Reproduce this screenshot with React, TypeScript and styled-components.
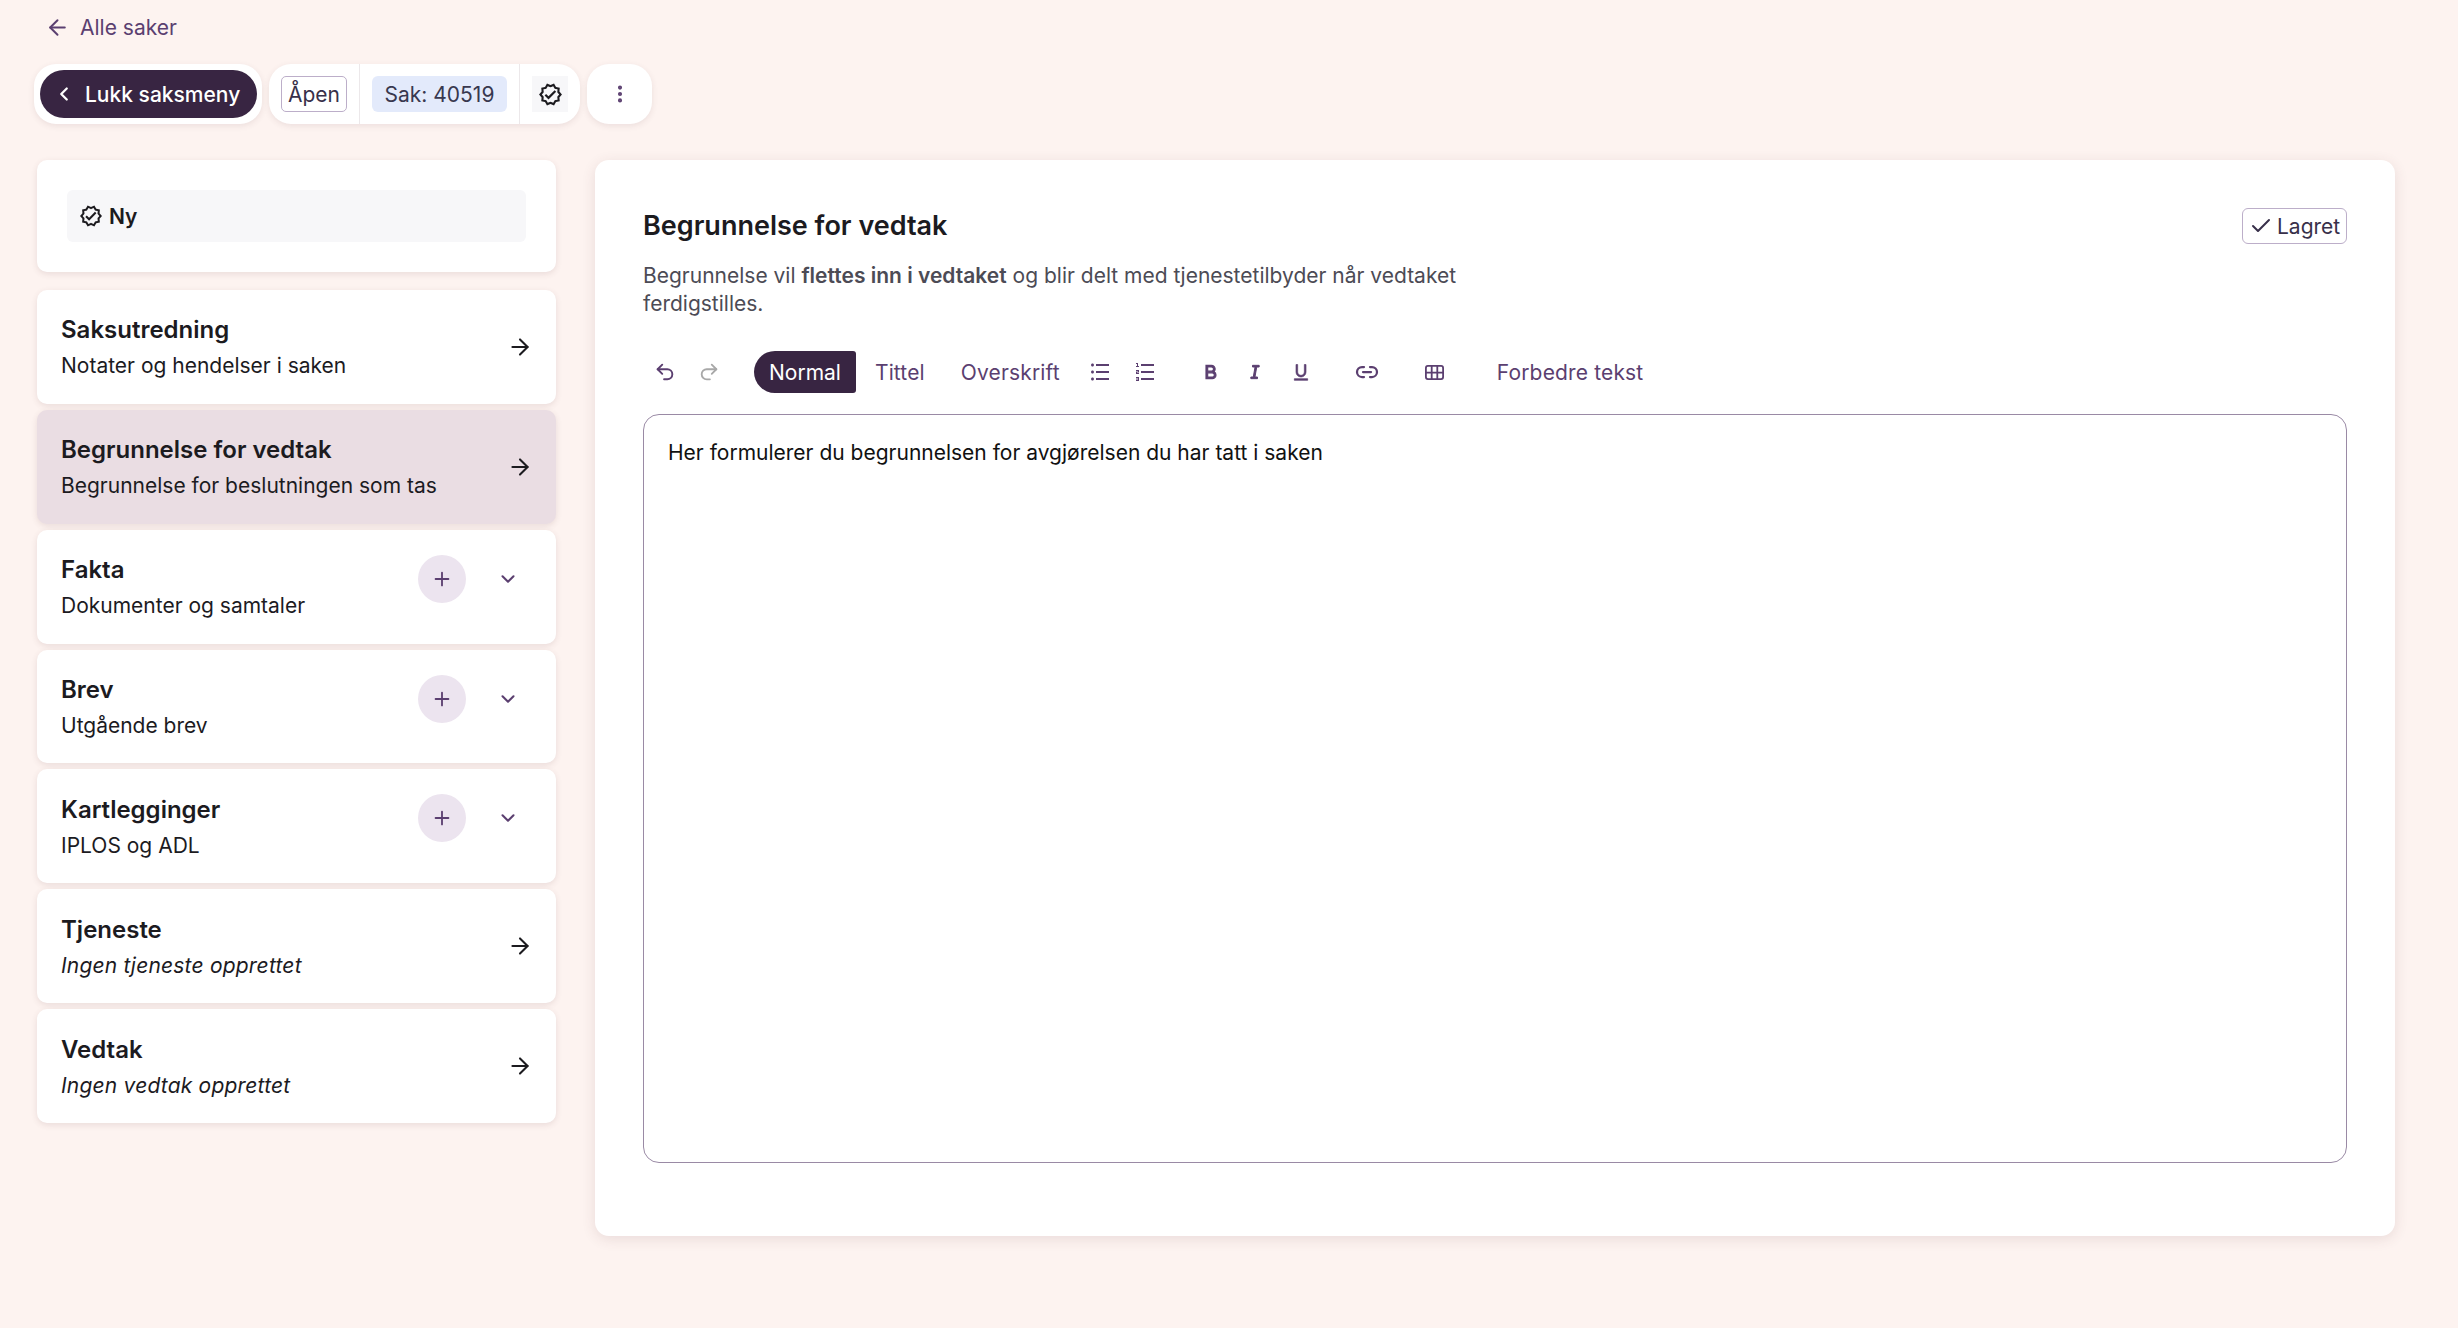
import React from "react";
import styled, { createGlobalStyle } from "styled-components";
import { ArrowLeft, ArrowRight, Check, ChevronDown, ChevronLeft, MoreVertical, Plus, Link2, Undo2, Redo2 } from "lucide-react";
import { MdOutlineVerified } from "react-icons/md";
import { RiBold, RiItalic, RiUnderline, RiListUnordered, RiListOrdered } from "react-icons/ri";

const Global = createGlobalStyle`
  html, body { margin: 0; padding: 0; background: #fdf3f0; }
  body { font-family: Inter, "Liberation Sans", sans-serif; color: #1c1b1f; }
  * { box-sizing: border-box; }
`;

const Page = styled.div`
  min-height: 1328px;
  padding: 0 63px 0 37px;
  display: flex;
  flex-direction: column;
`;
const BackLink = styled.a`
  height: 54px;
  margin-left: 8px;
  display: flex;
  align-items: center;
  gap: 10px;
  font-size: 21px;
  color: #5b3f70;
`;
const TopBar = styled.div`
  margin: 10px 0 36px -3px;
  display: flex;
  gap: 7px;
`;
const BarGroup = styled.div`
  height: 60px;
  background: #fff;
  border-radius: 22px;
  box-shadow: 0 2px 6px rgba(90, 50, 60, 0.1);
  display: flex;
  align-items: center;
`;
const CloseButton = styled.button`
  width: 217px;
  height: 48px;
  margin: 0 5px 0 6px;
  border: 0;
  border-radius: 24px;
  background: #382542;
  color: #fff;
  font: 500 21px Inter, sans-serif;
  display: flex;
  align-items: center;
  padding: 0 0 0 13px;
  gap: 10px;
`;
const BarCell = styled.div<{ $last?: boolean }>`
  height: 100%;
  padding: 0 12px;
  display: flex;
  align-items: center;
  border-right: ${(p) => (p.$last ? "0" : "1px solid #ece8ea")};
`;
const OpenTag = styled.span`
  width: 66px;
  height: 36px;
  display: flex;
  align-items: center;
  justify-content: center;
  border: 1px solid #bcaec9;
  border-radius: 5px;
  font-size: 21px;
  color: #38304a;
`;
const CaseTag = styled.span`
  width: 135px;
  height: 36px;
  display: flex;
  align-items: center;
  justify-content: center;
  border-radius: 6px;
  background: #e3eafb;
  font-size: 21px;
  color: #38384f;
`;
const StatusIcon = styled.span`
  width: 36px;
  height: 36px;
  display: flex;
  align-items: center;
  justify-content: center;
  background: #f7f7f9;
  color: #1c1b1f;
`;
const MoreButton = styled.div`
  width: 65px;
  height: 60px;
  display: flex;
  align-items: center;
  justify-content: center;
  color: #5b3f70;
`;
const Columns = styled.div`
  display: flex;
  gap: 39px;
  align-items: flex-start;
`;
const Side = styled.div`
  width: 519px;
  flex: none;
  display: flex;
  flex-direction: column;
`;
const StatusCard = styled.div`
  height: 112px;
  margin-bottom: 18px;
  padding: 30px;
  background: #fff;
  border-radius: 10px;
  box-shadow: 0 2px 6px rgba(90, 50, 60, 0.12);
`;
const StatusRow = styled.div`
  height: 52px;
  padding: 0 12px;
  display: flex;
  align-items: center;
  gap: 6px;
  background: #f7f7f9;
  border-radius: 6px;
  font-size: 21px;
  font-weight: 600;
`;
const NavCard = styled.div<{ $active?: boolean }>`
  height: 113.86px;
  margin-bottom: 6px;
  padding: 0 23px 0 24px;
  display: flex;
  align-items: center;
  justify-content: space-between;
  background: ${(p) => (p.$active ? "#eaddE3" : "#fff")};
  border-radius: 10px;
  box-shadow: 0 2px 6px rgba(90, 50, 60, 0.12);
`;
const NavText = styled.div`
  display: flex;
  flex-direction: column;
  gap: 8px;
  padding-top: 3px;
`;
const NavTitle = styled.div`
  font-size: 24px;
  line-height: 28px;
  font-weight: 600;
`;
const NavSub = styled.div<{ $empty?: boolean }>`
  font-size: 21px;
  line-height: 28px;
  font-style: ${(p) => (p.$empty ? "italic" : "normal")};
  letter-spacing: ${(p) => (p.$empty ? "0.2px" : "0")};
`;
const NavActions = styled.div`
  display: flex;
  align-items: center;
  gap: 31px;
  margin-top: -16px;
  margin-right: 14px;
  color: #5b3f70;
`;
const AddButton = styled.div`
  width: 48px;
  height: 48px;
  border-radius: 50%;
  background: #ece4ef;
  display: flex;
  align-items: center;
  justify-content: center;
`;
const Main = styled.div`
  flex: 1;
  height: 1076px;
  padding: 48px;
  background: #fff;
  border-radius: 14px;
  box-shadow: 0 3px 14px rgba(90, 50, 60, 0.12);
`;
const MainHead = styled.div`
  display: flex;
  justify-content: space-between;
  align-items: flex-start;
`;
const MainTitle = styled.h1`
  margin: 0;
  font-size: 27px;
  line-height: 36px;
  font-weight: 600;
`;
const SavedTag = styled.span`
  width: 105px;
  height: 36px;
  padding-left: 6px;
  display: flex;
  align-items: center;
  gap: 4px;
  border: 1px solid #bcaec9;
  border-radius: 6px;
  font-size: 21px;
  color: #38304a;
`;
const Lead = styled.p`
  width: 860px;
  margin: 18px 0 0;
  font-size: 21px;
  line-height: 28px;
  color: #4c4b55;
  & b { font-weight: 600; }
`;
const EditorBar = styled.div`
  height: 42px;
  margin: 33px 0 21px;
  display: flex;
  align-items: center;
  color: #5b3f70;
  font-size: 21px;
`;
const IconCell = styled.span<{ $gapLeft?: number; $muted?: boolean }>`
  width: 44px;
  flex: none;
  margin-left: ${(p) => p.$gapLeft ?? 0}px;
  display: flex;
  align-items: center;
  justify-content: center;
  color: ${(p) => (p.$muted ? "#a8a8a8" : "inherit")};
`;
const StyleTab = styled.span<{ $active?: boolean; $gapLeft: number }>`
  height: 42px;
  flex: none;
  margin-left: ${(p) => p.$gapLeft}px;
  padding: ${(p) => (p.$active ? "0 15px" : "0")};
  display: flex;
  align-items: center;
  border-radius: 21px 3px 3px 21px;
  background: ${(p) => (p.$active ? "#382542" : "transparent")};
  color: ${(p) => (p.$active ? "#fff" : "inherit")};
  letter-spacing: ${(p) => (p.$active ? "0" : "0.15px")};
`;
const Editor = styled.div`
  height: 749px;
  padding: 24px 24px;
  border: 1.5px solid #9a8aa5;
  border-radius: 16px;
  font-size: 21px;
  line-height: 28px;
  color: #111;
`;

const TableIcon = () => (
  <svg width="19" height="15" viewBox="0 0 19 15" fill="none" stroke="currentColor" strokeWidth="1.8">
    <rect x="0.9" y="0.9" width="17.2" height="13.2" rx="2" />
    <path d="M0.9 7.7H18.1M6.7 1V14M12.3 1V14" />
  </svg>
);

type Item = { title: string; sub: string; active?: boolean; empty?: boolean; expand?: boolean };
const items: Item[] = [
  { title: "Saksutredning", sub: "Notater og hendelser i saken" },
  { title: "Begrunnelse for vedtak", sub: "Begrunnelse for beslutningen som tas", active: true },
  { title: "Fakta", sub: "Dokumenter og samtaler", expand: true },
  { title: "Brev", sub: "Utgående brev", expand: true },
  { title: "Kartlegginger", sub: "IPLOS og ADL", expand: true },
  { title: "Tjeneste", sub: "Ingen tjeneste opprettet", empty: true },
  { title: "Vedtak", sub: "Ingen vedtak opprettet", empty: true },
];

export default function App() {
  return (
    <Page>
      <Global />
      <BackLink><ArrowLeft size={25} strokeWidth={1.9} />Alle saker</BackLink>
      <TopBar>
        <BarGroup>
          <CloseButton><ChevronLeft size={22} strokeWidth={2.5} />Lukk saksmeny</CloseButton>
        </BarGroup>
        <BarGroup>
          <BarCell><OpenTag>Åpen</OpenTag></BarCell>
          <BarCell><CaseTag>Sak: 40519</CaseTag></BarCell>
          <BarCell $last><StatusIcon><MdOutlineVerified size={25} /></StatusIcon></BarCell>
        </BarGroup>
        <BarGroup>
          <MoreButton><MoreVertical size={22} strokeWidth={2.5} /></MoreButton>
        </BarGroup>
      </TopBar>
      <Columns>
        <Side>
          <StatusCard>
            <StatusRow><MdOutlineVerified size={24} />Ny</StatusRow>
          </StatusCard>
          {items.map((it) => (
            <NavCard key={it.title} $active={it.active}>
              <NavText>
                <NavTitle>{it.title}</NavTitle>
                <NavSub $empty={it.empty}>{it.sub}</NavSub>
              </NavText>
              {it.expand ? (
                <NavActions>
                  <AddButton><Plus size={22} strokeWidth={2} /></AddButton>
                  <ChevronDown size={22} strokeWidth={2.25} />
                </NavActions>
              ) : (
                <ArrowRight size={26} strokeWidth={1.9} />
              )}
            </NavCard>
          ))}
        </Side>
        <Main>
          <MainHead>
            <MainTitle>Begrunnelse for vedtak</MainTitle>
            <SavedTag><Check size={24} strokeWidth={2} />Lagret</SavedTag>
          </MainHead>
          <Lead>Begrunnelse vil <b>flettes inn i vedtaket</b> og blir delt med tjenestetilbyder når vedtaket ferdigstilles.</Lead>
          <EditorBar>
            <IconCell><Undo2 size={22} strokeWidth={2.1} /></IconCell>
            <IconCell $muted><Redo2 size={22} strokeWidth={2} /></IconCell>
            <StyleTab $active $gapLeft={23}>Normal</StyleTab>
            <StyleTab $gapLeft={19}>Tittel</StyleTab>
            <StyleTab $gapLeft={36}>Overskrift</StyleTab>
            <IconCell $gapLeft={18}><RiListUnordered size={24} /></IconCell>
            <IconCell $gapLeft={1}><RiListOrdered size={24} /></IconCell>
            <IconCell $gapLeft={22}><RiBold size={20} stroke="currentColor" strokeWidth={1.4} /></IconCell>
            <IconCell><RiItalic size={20} stroke="currentColor" strokeWidth={1.2} /></IconCell>
            <IconCell $gapLeft={2}><RiUnderline size={20} stroke="currentColor" strokeWidth={0.8} /></IconCell>
            <IconCell $gapLeft={22}><Link2 size={24} strokeWidth={2.25} /></IconCell>
            <IconCell $gapLeft={24}><TableIcon /></IconCell>
            <StyleTab $gapLeft={40}>Forbedre tekst</StyleTab>
          </EditorBar>
          <Editor>Her formulerer du begrunnelsen for avgjørelsen du har tatt i saken</Editor>
        </Main>
      </Columns>
    </Page>
  );
}
